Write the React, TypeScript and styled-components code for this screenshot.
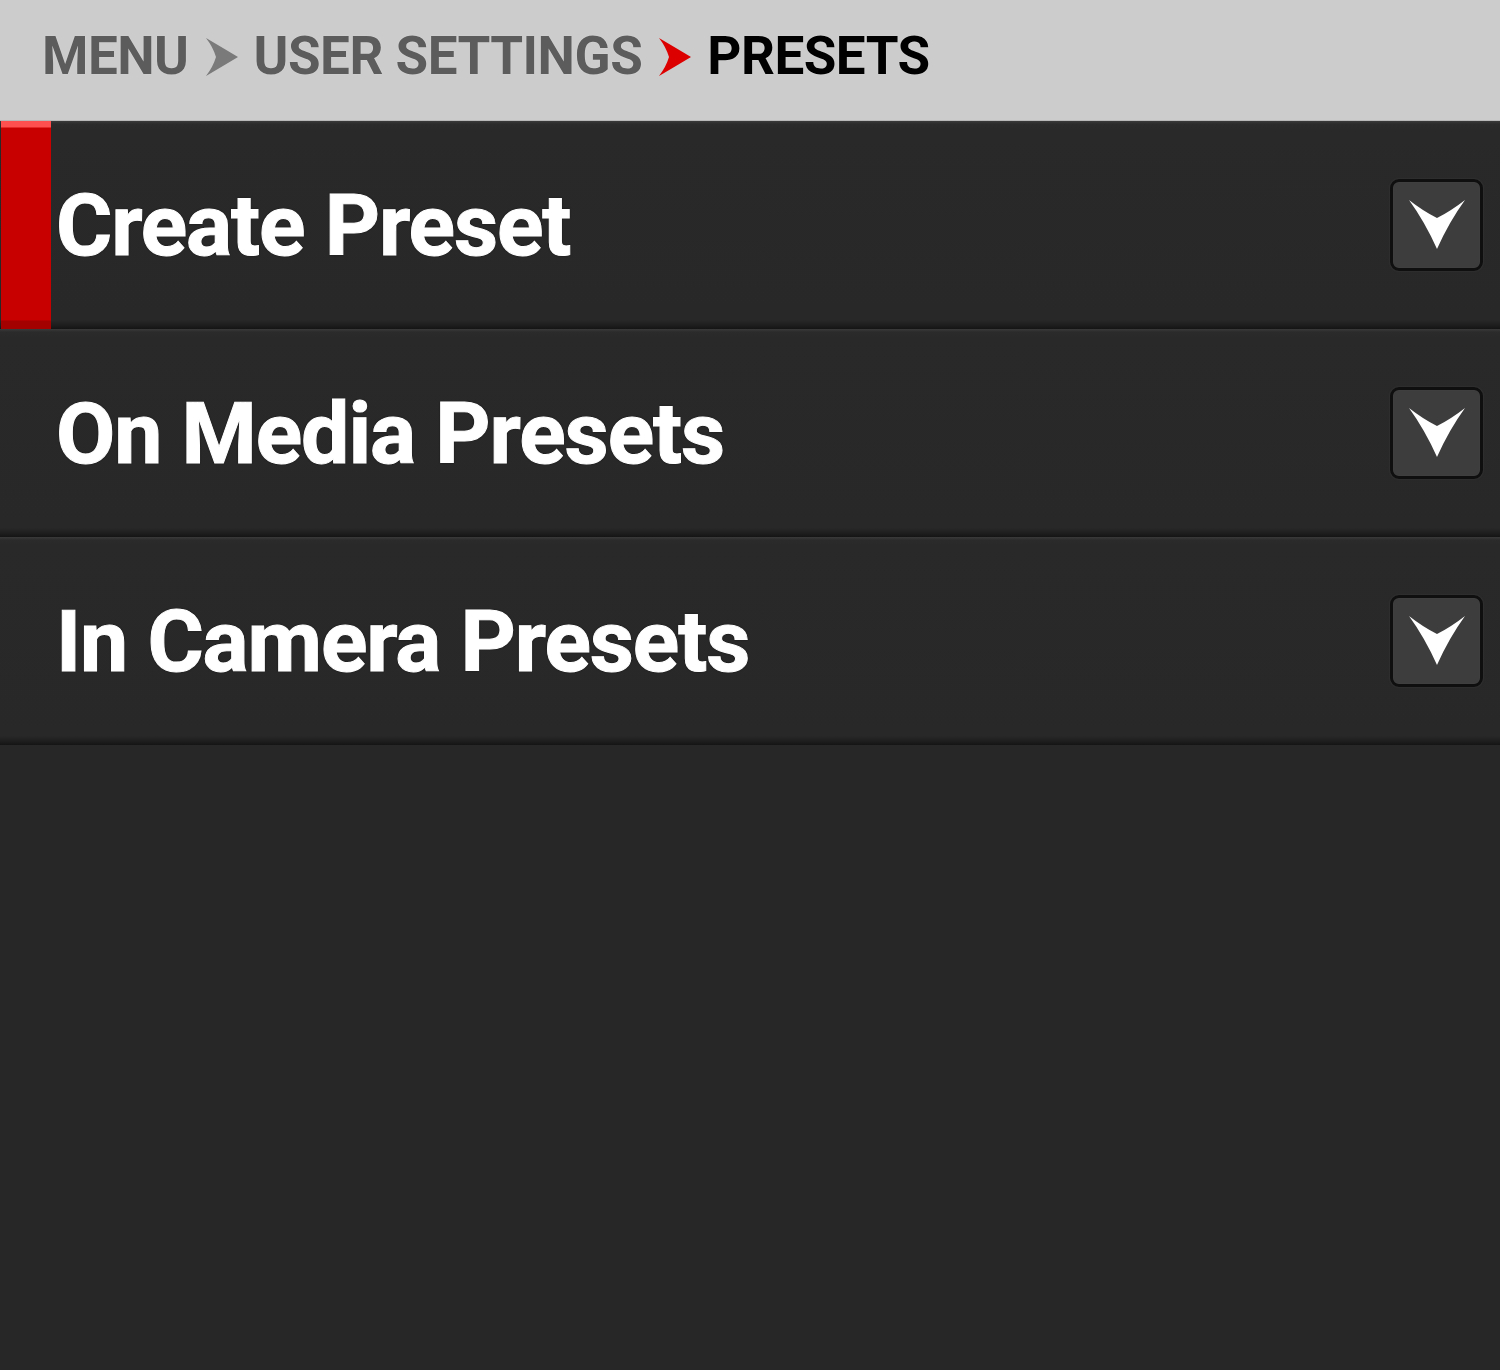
import React from "react";
import styled, { createGlobalStyle } from "styled-components";

const GlobalStyle = createGlobalStyle`
  html, body { margin: 0; padding: 0; background: #272727; }
  body { font-family: Roboto, "Liberation Sans", sans-serif; }
  * { box-sizing: border-box; }
`;

const Page = styled.div`
  width: 1500px;
  height: 1370px;
  background: #272727;
  display: flex;
  flex-direction: column;
`;

const Header = styled.header`
  height: 121px;
  flex: none;
  background: #cccccc;
  border-bottom: 1px solid #b8b8b8;
  display: flex;
  align-items: center;
  padding: 0 0 8px 42px;
  gap: 16px;
`;

const Crumb = styled.span<{ $current?: boolean }>`
  font-family: Roboto, "Liberation Sans", sans-serif;
  font-weight: 700;
  font-size: 53px;
  line-height: 1;
  letter-spacing: -0.5px;
  color: ${(p) => (p.$current ? "#000000" : "#5c5c5c")};
  text-shadow: 0 0 1px rgba(255, 255, 255, 0.6);
`;

const Sep = styled.svg`
  display: block;
  flex: none;
  margin-top: 1px;
`;

const List = styled.div`
  display: flex;
  flex-direction: column;
`;

const Row = styled.div`
  position: relative;
  height: 208px;
  display: flex;
  align-items: center;
  padding: 0 17px 0 56px;
  background: linear-gradient(
    to bottom,
    #3a3a3a 0px,
    #2b2b2b 3px,
    #292929 8px,
    #282828 calc(100% - 9px),
    #1e1e1e calc(100% - 4px),
    #141414 100%
  );
`;

const ActiveBar = styled.div`
  position: absolute;
  left: 1px;
  top: 0;
  bottom: 0;
  width: 50px;
  background: linear-gradient(
    to bottom,
    #ff5050 0px,
    #ff5050 6px,
    #c80000 7px,
    #c80000 calc(100% - 9px),
    #a30000 calc(100% - 8px),
    #a30000 100%
  );
`;

const Label = styled.span`
  flex: 1;
  font-family: Roboto, "Liberation Sans", sans-serif;
  font-weight: 700;
  font-size: 86px;
  line-height: 1;
  color: #ffffff;
  letter-spacing: -1.1px;
  -webkit-text-stroke: 1px #ffffff;
  text-shadow: 0 0 2px rgba(0, 0, 0, 0.9);
  margin-top: 2px;
`;

const DropButton = styled.button`
  width: 93px;
  height: 92px;
  flex: none;
  border: 3px solid #0f0f0f;
  border-radius: 9px;
  background: #3d3d3d;
  box-shadow: 0 0 2px rgba(80, 80, 80, 0.6), inset 0 0 1px #555;
  display: flex;
  align-items: center;
  justify-content: center;
  padding: 0;
  cursor: pointer;
`;

const DownArrow = () => (
  <svg width="56" height="50" viewBox="0 0 56 50">
    <path
      d="M0 0 Q14 11 28 18 Q42 11 56 0 Q40 22 28 49 Q16 22 0 0 Z"
      fill="#ffffff"
    />
  </svg>
);

const Chevron = ({ color }: { color: string }) => (
  <Sep width="33" height="38" viewBox="0 0 33 38">
    <path d="M1 0 Q18 10 33 19 Q18 28 1 38 Q8 29 11 19 Q8 9 1 0 Z" fill={color} />
  </Sep>
);

const items = ["Create Preset", "On Media Presets", "In Camera Presets"];

export default function App() {
  return (
    <Page>
      <GlobalStyle />
      <Header>
        <Crumb>MENU</Crumb>
        <Chevron color="#7a7a7a" />
        <Crumb>USER SETTINGS</Crumb>
        <Chevron color="#dd0000" />
        <Crumb $current>PRESETS</Crumb>
      </Header>
      <List>
        {items.map((label, i) => (
          <Row key={label}>
            {i === 0 && <ActiveBar />}
            <Label>{label}</Label>
            <DropButton aria-label={`Expand ${label}`}>
              <DownArrow />
            </DropButton>
          </Row>
        ))}
      </List>
    </Page>
  );
}
